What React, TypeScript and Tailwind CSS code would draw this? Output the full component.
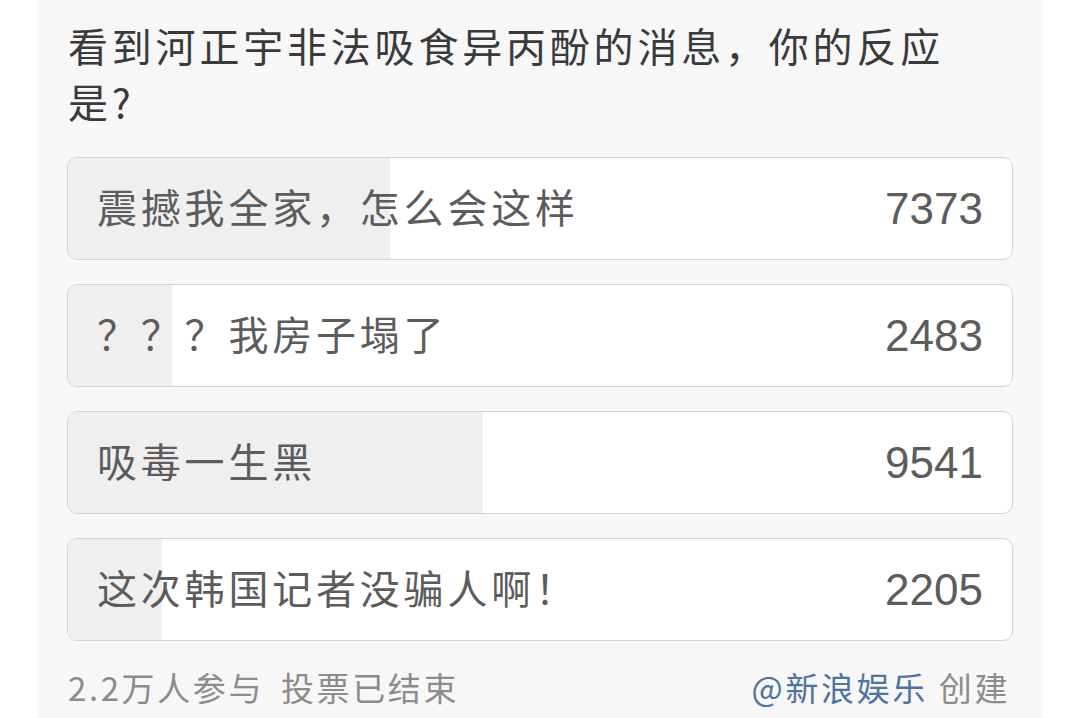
import React from 'react';

const font = "font-['Noto_Sans_CJK_SC','Noto_Sans',sans-serif]";

const options = [
  { label: '震撼我全家，怎么会这样', count: '7373', fill: 322 },
  { label: '？？？我房子塌了', count: '2483', fill: 104 },
  { label: '吸毒一生黑', count: '9541', fill: 415 },
  { label: '这次韩国记者没骗人啊！', count: '2205', fill: 94 },
];

export default function App() {
  return (
    <div className={`min-h-screen bg-white flex justify-center ${font}`}>
      <div className="w-[1004px] h-[718px] bg-[#f7f7f7] px-[29px] pt-[17px]">
        {/* Question */}
        <h1 className="text-[40px] leading-[56px] tracking-[3.8px] text-[#3a3a3a] pl-[1px] font-normal">
          看到河正宇非法吸食异丙酚的消息，你的反应
          <br />
          是?
        </h1>

        {/* Options */}
        <div className="mt-[28px] flex flex-col gap-[24px]">
          {options.map((o) => (
            <div
              key={o.count}
              className="relative h-[103px] rounded-[10px] border border-[#d4d4d4] bg-white overflow-hidden"
            >
              <div className="absolute inset-y-0 left-0 bg-[#efefef]" style={{ width: o.fill }} />
              <div className="relative h-full flex items-center justify-between pl-[29px] pr-[29px] text-[#5c5c5c]">
                <span className="text-[40px] tracking-[3.8px] mb-[6px]">{o.label}</span>
                <span className="text-[44px] font-['Liberation_Sans',sans-serif]">{o.count}</span>
              </div>
            </div>
          ))}
        </div>

        {/* Footer */}
        <div className="mt-[24px] flex items-center justify-between text-[33px] leading-[44px] tracking-[2.6px] text-[#8c8c8c]">
          <div className="flex gap-[17px] pl-[1px]">
            <span>2.2万人参与</span>
            <span>投票已结束</span>
          </div>
          <div className="flex gap-[11px] pr-[3px]">
            <span className="text-[#51739f]">@新浪娱乐</span>
            <span>创建</span>
          </div>
        </div>
      </div>
    </div>
  );
}
